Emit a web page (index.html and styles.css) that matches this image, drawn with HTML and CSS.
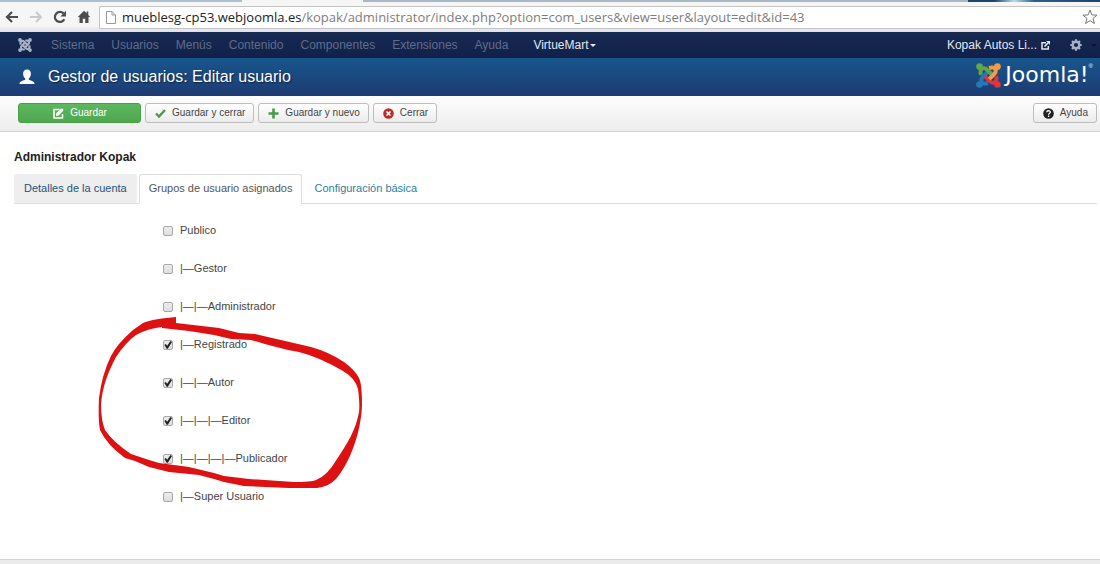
FILE: index.html
```html
<!DOCTYPE html>
<html lang="es">
<head>
<meta charset="utf-8">
<meta name="viewport" content="width=device-width, initial-scale=1">
<title>Gestor de usuarios: Editar usuario</title>
<link rel="stylesheet" href="styles.css">
</head>
<body>
<div class="tabstrip"><span class="tabstrip-rest"></span><span class="tabstrip-active"></span><span class="tabstrip-rest tabstrip-wide"></span><span class="tabstrip-glass"></span></div>
<div class="browser">
  <button class="nav-btn" type="button" aria-label="Atrás"><svg width="14" height="14" viewBox="0 0 14 14"><path d="M13 7H2M7 2L2 7l5 5" fill="none" stroke="#4d4d4d" stroke-width="2.2"/></svg></button>
  <button class="nav-btn" type="button" aria-label="Adelante"><svg width="14" height="14" viewBox="0 0 14 14"><path d="M1 7h11M7 2l5 5-5 5" fill="none" stroke="#c9c9c9" stroke-width="2"/></svg></button>
  <button class="nav-btn" type="button" aria-label="Recargar"><svg width="14" height="14" viewBox="0 0 14 14"><path d="M11.3 9.3A5 5 0 1 1 10.6 3.6" fill="none" stroke="#4d4d4d" stroke-width="2.3"/><path d="M13 .8V6.500H7.300z" fill="#4d4d4d"/></svg></button>
  <button class="nav-btn" type="button" aria-label="Inicio"><svg width="14" height="14" viewBox="0 0 14 14"><path d="M7 .8L.8 7h1.700v6h3.300V8.800h2.400V13h3.300V7h1.700l-1.900-1.900V1.500H9.600v1.800z" fill="#4d4d4d"/></svg></button>
  <div class="address">
    <svg width="10" height="13" viewBox="0 0 10 13"><path d="M.5.5h5.500l3.500 3.500v8.500H.5zM6 .5V4h3.500" fill="#fff" stroke="#999"/></svg>
    <span class="url"><span class="host">mueblesg-cp53.webjoomla.es</span>/kopak/administrator/index.php?option=com_users&amp;view=user&amp;layout=edit&amp;id=43</span>
    <button class="star" type="button" aria-label="Marcador"><svg width="16" height="16" viewBox="0 0 16 16"><path d="M8 1l1.900 4.900 5.200.3-4.100 3.200 1.400 5.100L8 11.600l-4.400 2.900L5 9.400.9 6.200l5.200-.3z" fill="#fff" stroke="#777"/></svg></button>
  </div>
</div>

<nav class="navbar">
  <svg class="brand" width="14" height="14" viewBox="0 0 24 24" aria-hidden="true">
    <g id="arm"><circle cx="3.400" cy="3.400" r="3.200" fill="currentColor"/><path d="M4.800 11.500C3.800 8.500 4.300 5.800 6.500 5.200c1.800-.5 3.200.3 4.500 1.600l4.500 4.500" fill="none" stroke="currentColor" stroke-width="3.800"/></g>
    <use href="#arm" transform="rotate(90 12 12)"/><use href="#arm" transform="rotate(180 12 12)"/><use href="#arm" transform="rotate(270 12 12)"/>
  </svg>
  <ul class="menu">
    <li class="off">Sistema</li><li class="off">Usuarios</li><li class="off">Menús</li><li class="off">Contenido</li><li class="off">Componentes</li><li class="off">Extensiones</li><li class="off">Ayuda</li>
    <li class="vm"><a href="#">VirtueMart<span class="caret"></span></a></li>
  </ul>
  <a class="site" href="#">Kopak Autos Li...
    <svg width="9" height="9" viewBox="0 0 9 9"><path d="M5 1.700H1v6.300h6.300V5" fill="none" stroke="currentColor" stroke-width="1.500"/><path d="M3.500 5.500L7 2" stroke="currentColor" stroke-width="1.600"/><path d="M5 0h4v4z" fill="currentColor"/></svg>
  </a>
  <button class="gear" type="button" aria-label="Ajustes"><svg width="12" height="12" viewBox="0 0 12 12"><circle cx="6" cy="6" r="3.300" fill="none" stroke="#a9b1c4" stroke-width="2.400"/><path d="M6 .3v2M6 9.700v2M.3 6h2M9.700 6h2M2 2l1.400 1.400M8.600 8.600L10 10M2 10l1.400-1.400M8.600 3.400L10 2" stroke="#a9b1c4" stroke-width="2.200"/></svg><span class="caret dark"></span></button>
</nav>

<header class="header">
  <svg width="16" height="16" viewBox="0 0 16 16" aria-hidden="true"><path d="M8 .5c2.600 0 3.900 1.800 3.900 4.200 0 2-.9 3.900-2.100 4.800v1.200c1 .8 5.700 1.100 5.700 3.900v.4H.5v-.4c0-2.800 4.700-3.100 5.700-3.900V9.500C5 8.600 4.100 6.700 4.100 4.700 4.100 2.300 5.400.5 8 .5z" fill="#fff"/></svg>
  <h1>Gestor de usuarios: Editar usuario</h1>
  <div class="logo">
    <svg width="25" height="25" viewBox="0 0 24 24" aria-hidden="true">
      <use href="#arm" class="blue" transform="rotate(270 12 12)"/><use href="#arm" class="red" transform="rotate(180 12 12)"/><use href="#arm" class="green"/><use href="#arm" class="orange" transform="rotate(90 12 12)"/>
    </svg>
    <span class="wordmark">Joomla!</span><span class="reg">®</span>
  </div>
</header>

<div class="toolbar">
  <button class="btn save" type="button"><svg width="11" height="11" viewBox="0 0 11 11"><path d="M6.500 1.500H1v8.500h8.500V6" fill="none" stroke="#fff" stroke-width="1.600"/><path d="M3.200 5.300l4.500-4.500h2.500v2L5.800 7.500l-2.800.6z" fill="#fff"/></svg>Guardar</button>
  <button class="btn" type="button"><svg width="11" height="11" viewBox="0 0 11 11"><path d="M1 5.500l3 3L10 2" fill="none" stroke="#4a9a4a" stroke-width="2.400"/></svg>Guardar y cerrar</button>
  <button class="btn" type="button"><svg width="11" height="11" viewBox="0 0 11 11"><path d="M5.500.5v10M.5 5.500h10" stroke="#4a9a4a" stroke-width="2.600"/></svg>Guardar y nuevo</button>
  <button class="btn" type="button"><svg width="11" height="11" viewBox="0 0 11 11"><circle cx="5.500" cy="5.500" r="5.300" fill="#b5302b"/><path d="M3.500 3.500l4 4M7.500 3.500l-4 4" stroke="#fff" stroke-width="1.500"/></svg>Cerrar</button>
  <button class="btn help" type="button"><svg width="11" height="11" viewBox="0 0 11 11"><circle cx="5.500" cy="5.500" r="5.300" fill="#222"/><path d="M3.700 4.300C3.800 2.300 7.300 2.200 7.300 4.200 7.300 5.300 5.600 5.400 5.600 6.700M5.600 7.600V9" fill="none" stroke="#fff" stroke-width="1.300"/></svg>Ayuda</button>
</div>

<main class="content">
  <h2>Administrador Kopak</h2>
  <ul class="tabs">
    <li><a class="tab hover" href="#">Detalles de la cuenta</a></li>
    <li><a class="tab active" href="#">Grupos de usuario asignados</a></li>
    <li><a class="tab" href="#">Configuración básica</a></li>
  </ul>
  <div class="groups">
    <label class="group"><input type="checkbox">Publico</label>
    <label class="group"><input type="checkbox">|—Gestor</label>
    <label class="group"><input type="checkbox">|—|—Administrador</label>
    <label class="group"><input type="checkbox" checked>|—Registrado</label>
    <label class="group"><input type="checkbox" checked>|—|—Autor</label>
    <label class="group"><input type="checkbox" checked>|—|—|—Editor</label>
    <label class="group"><input type="checkbox" checked>|—|—|—|—Publicador</label>
    <label class="group"><input type="checkbox">|—Super Usuario</label>
    <svg class="marker" width="275" height="180" viewBox="95 312 275 180" aria-hidden="true"><path fill="#dd1111" fill-rule="evenodd" d="M177 317C165 318 150 320 144 323L134 330Q118 344 112 356Q103 374 100 398Q99 420 101 430Q108 445 126 458L136 461L150 467L170 472L200 475L215 479L225 482L245 486L290 488L318 488Q329 487 337 479C350 464 362 434 363 405Q363 384 360 378Q356 370 345 362Q330 352 312 347L256 334L240 333L220 328L177 323ZM163 328L190 331L215 335L232 339L252 340C266 344 285 350 300 352Q320 357 344 371Q356 378 359 389Q361 405 360 412C357 430 348 444 338 459Q328 476 317 480Q312 482 295 482L250 479L225 476L215 473L190 467L160 463L150 460L132 454Q114 442 106 430Q102 420 102 405C103 388 109 372 117 357Q127 342 137 335Q150 328 163 327Z"/></svg>
  </div>
</main>
<footer class="status"></footer>
</body>
</html>
```
FILE: styles.css
```css
* { box-sizing: border-box; }
body {
  margin: 0;
  min-height: 100vh;
  display: flex;
  flex-direction: column;
  background: #fff;
  color: #444;
  font: 11px/18px "Liberation Sans", Arial, sans-serif;
}
ul { list-style: none; margin: 0; padding: 0; }
a { text-decoration: none; color: inherit; }
button { font: inherit; color: inherit; margin: 0; cursor: pointer; }
svg { display: block; flex: none; }

.tabstrip { display: flex; height: 2px; background: #f4f4f4; }
.tabstrip-rest { width: 22%; background: #aebfcf; }
.tabstrip-active { width: 11%; background: #f4f4f4; }
.tabstrip-wide { flex: 1; background: #a9b9c4; }
.tabstrip-glass { width: 12%; background: linear-gradient(90deg, #1c4470 20%, #b8dcf0 35%, #2a6090 50%, #1c4470); }

.browser {
  display: flex;
  align-items: center;
  height: 30px;
  padding-left: 5px;
  background: linear-gradient(#f6f6f6 80%, #dfdfe6);
}
.nav-btn { border: 0; background: none; padding: 0; width: 14px; margin-right: 10px; }
.address {
  flex: 1;
  display: flex;
  align-items: center;
  gap: 6px;
  height: 23px;
  padding: 0 2px 0 6px;
  margin-left: -2px;
  background: #fff;
  border: 1px solid #c3c3c3;
  border-right: 0;
  border-radius: 2px 0 0 2px;
}
.url { flex: 1; font: 13px/20px "Open Sans", "Noto Sans", sans-serif; color: #7d7d7d; white-space: nowrap; overflow: hidden; }
.host { color: #222; }
.star { border: 0; background: none; padding: 0; }

.navbar {
  display: flex;
  align-items: center;
  height: 26px;
  padding: 0 3px 0 18px;
  background: linear-gradient(#172a52, #10204a);
  font-size: 12px;
  color: #e4e8f0;
}
.brand { color: #a9b1c4; margin-right: 19px; }
.menu { display: flex; gap: 17px; flex: 1; }
.off { color: #606c89; }
.vm { margin-left: 8px; }
.caret {
  display: inline-block;
  margin-left: 1px;
  vertical-align: middle;
  border: 3px solid transparent;
  border-top-color: currentColor;
  border-bottom: 0;
}
.dark { color: #0a1430; }
.site { display: flex; align-items: center; gap: 4px; margin-right: 20px; }
.gear { display: flex; align-items: center; gap: 8px; border: 0; background: none; padding: 0; }

.header {
  display: flex;
  align-items: center;
  height: 38px;
  padding: 0 7px 0 19px;
  background: linear-gradient(#17568c, #1d3b72);
  color: #fff;
}
.header h1 { flex: 1; margin: 0 0 0 13px; font-size: 16px; line-height: 24px; font-weight: 400; text-shadow: 1px 1px 1px #0d2348; }
.logo { display: flex; align-items: center; margin-bottom: 4px; }
.wordmark { margin-left: 4px; font: 400 22px/24px "DejaVu Sans", sans-serif; }
.reg { font-size: 6px; line-height: 6px; align-self: flex-start; }
.green { color: #5fa845; }
.orange { color: #f59a45; }
.red { color: #e2343c; }
.blue { color: #2478b8; }

.toolbar {
  display: flex;
  gap: 4px;
  height: 36px;
  padding: 7px 3px 8px 18px;
  background: linear-gradient(#fdfdfd, #ededed);
  border-bottom: 1px solid #d3d3d3;
}
.btn {
  display: flex;
  align-items: center;
  justify-content: center;
  gap: 6px;
  padding: 0 8px 0 9px;
  font-size: 10px;
  line-height: 18px;
  color: #444;
  background: linear-gradient(#fff, #ebebeb);
  border: 1px solid #bdbdbd;
  border-radius: 3px;
}
.save { width: 123px; color: #fff; background: linear-gradient(#5db85d, #4fa64f); border-color: #46a046; }
.help { margin-left: auto; }

.content { flex: 1; padding: 16px 3px 0 14px; }
.content h2 { margin: 0 0 8px; font-size: 12px; line-height: 18px; color: #222; }
.tabs { display: flex; gap: 2px; border-bottom: 1px solid #ddd; }
.tabs li { margin-bottom: -1px; }
.tab { display: block; padding: 4px 9px 6px; border: 1px solid transparent; border-radius: 3px 3px 0 0; color: #2a7fa3; }
.hover { background: #eee; color: #1f5478; border-bottom-color: #ddd; }
.active { background: #fff; color: #555; border-color: #ddd; border-bottom-color: #fff; }

.groups { position: relative; display: flex; flex-direction: column; align-items: flex-start; gap: 20px; padding: 17px 0 0 149px; }
.group { display: flex; align-items: center; gap: 7px; line-height: 18px; }
.group input {
  appearance: none;
  width: 10px;
  height: 10px;
  margin: 2px 0 0;
  border: 1px solid #a8a8a8;
  border-radius: 2px;
  background: linear-gradient(#ececec, #dedede);
}
.group input:checked::before {
  content: "";
  display: block;
  height: 8px;
  background: #222;
  clip-path: polygon(5% 50%, 22% 36%, 40% 58%, 80% 0, 100% 12%, 48% 96%, 34% 96%);
}
.marker { position: absolute; left: 80px; top: 108px; pointer-events: none; }

.status { height: 5px; background: #ebebeb; border-top: 1px solid #d3d3d3; }
```
